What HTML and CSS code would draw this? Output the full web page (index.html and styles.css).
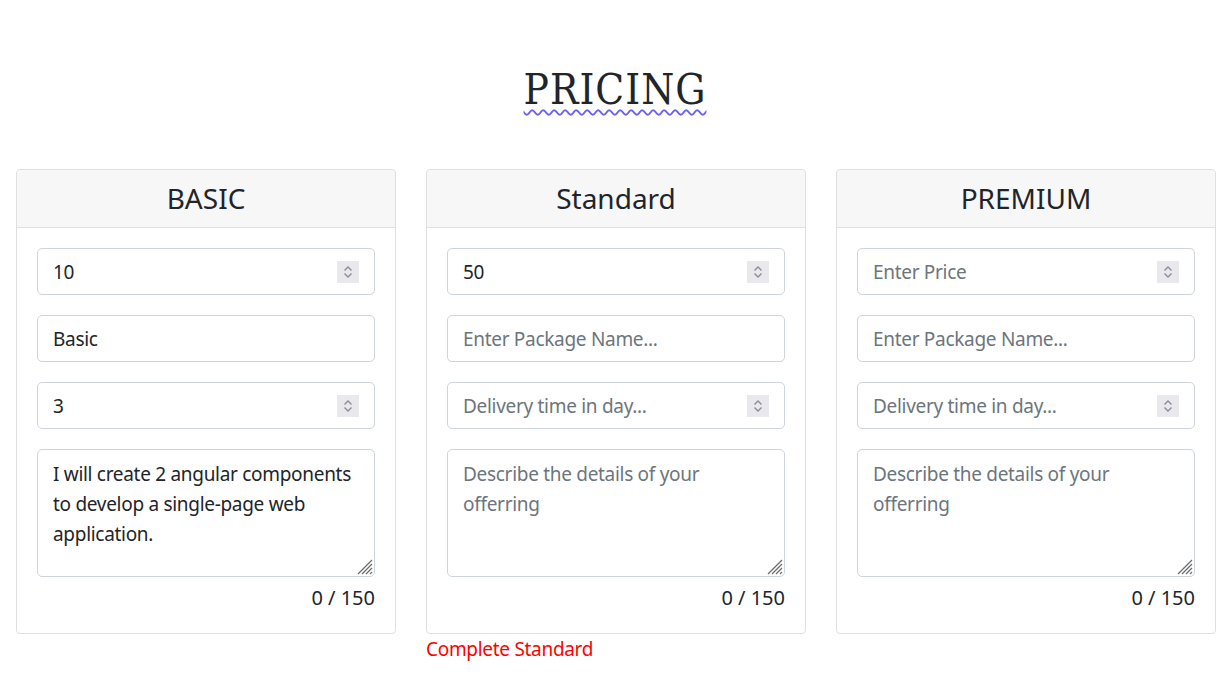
FILE: index.html
```html
<!DOCTYPE html>
<html>
<head>
<meta charset="utf-8">
<link rel="stylesheet" href="styles.css">
</head>
<body>
<h1 class="title"><span class="title-text">PRICING</span></h1>
<div class="cards">
  <div class="col">
    <div class="card">
      <div class="card-header"><h3 class="card-title">BASIC</h3></div>
      <div class="card-body">
        <div class="field"><input class="control" type="text" value="10" placeholder="Enter Price"><span class="spin"><svg width="10" height="16" viewBox="0 0 10 16"><path d="M1.5 6.5 L5 3 L8.5 6.5 M1.5 9.5 L5 13 L8.5 9.5" fill="none" stroke="#8d8b96" stroke-width="1.4"/></svg></span></div>
        <div class="field"><input class="control" type="text" value="Basic" placeholder="Enter Package Name..."></div>
        <div class="field"><input class="control" type="text" value="3" placeholder="Delivery time in day..."><span class="spin"><svg width="10" height="16" viewBox="0 0 10 16"><path d="M1.5 6.5 L5 3 L8.5 6.5 M1.5 9.5 L5 13 L8.5 9.5" fill="none" stroke="#8d8b96" stroke-width="1.4"/></svg></span></div>
        <div class="area-wrap"><textarea class="control area" placeholder="Describe the details of your offerring">I will create 2 angular components to develop a single-page web application.</textarea><svg class="grip" width="16" height="16" viewBox="0 0 16 16"><path d="M1 15 L15 1 M5 15 L15 5 M9 15 L15 9 M13 15 L15 13" stroke="#6b6b6b" stroke-width="1.2"/></svg></div>
        <div class="count">0 / 150</div>
      </div>
    </div>
  </div>
  <div class="col">
    <div class="card">
      <div class="card-header"><h3 class="card-title">Standard</h3></div>
      <div class="card-body">
        <div class="field"><input class="control" type="text" value="50" placeholder="Enter Price"><span class="spin"><svg width="10" height="16" viewBox="0 0 10 16"><path d="M1.5 6.5 L5 3 L8.5 6.5 M1.5 9.5 L5 13 L8.5 9.5" fill="none" stroke="#8d8b96" stroke-width="1.4"/></svg></span></div>
        <div class="field"><input class="control" type="text" placeholder="Enter Package Name..."></div>
        <div class="field"><input class="control" type="text" placeholder="Delivery time in day..."><span class="spin"><svg width="10" height="16" viewBox="0 0 10 16"><path d="M1.5 6.5 L5 3 L8.5 6.5 M1.5 9.5 L5 13 L8.5 9.5" fill="none" stroke="#8d8b96" stroke-width="1.4"/></svg></span></div>
        <div class="area-wrap"><textarea class="control area" placeholder="Describe the details of your offerring"></textarea><svg class="grip" width="16" height="16" viewBox="0 0 16 16"><path d="M1 15 L15 1 M5 15 L15 5 M9 15 L15 9 M13 15 L15 13" stroke="#6b6b6b" stroke-width="1.2"/></svg></div>
        <div class="count">0 / 150</div>
      </div>
    </div>
    <div class="error">Complete Standard</div>
  </div>
  <div class="col">
    <div class="card">
      <div class="card-header"><h3 class="card-title">PREMIUM</h3></div>
      <div class="card-body">
        <div class="field"><input class="control" type="text" placeholder="Enter Price"><span class="spin"><svg width="10" height="16" viewBox="0 0 10 16"><path d="M1.5 6.5 L5 3 L8.5 6.5 M1.5 9.5 L5 13 L8.5 9.5" fill="none" stroke="#8d8b96" stroke-width="1.4"/></svg></span></div>
        <div class="field"><input class="control" type="text" placeholder="Enter Package Name..."></div>
        <div class="field"><input class="control" type="text" placeholder="Delivery time in day..."><span class="spin"><svg width="10" height="16" viewBox="0 0 10 16"><path d="M1.5 6.5 L5 3 L8.5 6.5 M1.5 9.5 L5 13 L8.5 9.5" fill="none" stroke="#8d8b96" stroke-width="1.4"/></svg></span></div>
        <div class="area-wrap"><textarea class="control area" placeholder="Describe the details of your offerring"></textarea><svg class="grip" width="16" height="16" viewBox="0 0 16 16"><path d="M1 15 L15 1 M5 15 L15 5 M9 15 L15 9 M13 15 L15 13" stroke="#6b6b6b" stroke-width="1.2"/></svg></div>
        <div class="count">0 / 150</div>
      </div>
    </div>
  </div>
</div>
</body>
</html>
```
FILE: styles.css
```css
* { box-sizing: border-box; }
body {
  margin: 0;
  background: #fff;
  color: #212529;
  font-family: "Noto Sans", sans-serif;
  font-size: 19px;
  letter-spacing: -0.3px;
}
.title {
  margin: 0;
  padding: 62px 0 51px;
  text-align: center;
  font-family: "DejaVu Serif", serif;
  font-stretch: condensed;
  font-weight: 400;
  font-size: 42px;
  line-height: 56px;
  letter-spacing: 1px;
  color: #212529;
}
.title-text {
  text-decoration: underline wavy #6d63f2;
  text-decoration-thickness: 1.5px;
  text-underline-offset: 5px;
}
.cards {
  display: flex;
  gap: 30px;
  padding: 0 14px 0 16px;
}
.col { width: 380px; flex: none; }
.card {
  border: 1px solid #dfdfdf;
  border-radius: 4px;
  background: #fff;
}
.card-header {
  background: #f7f7f7;
  border-bottom: 1px solid #dfdfdf;
  border-radius: 4px 4px 0 0;
  padding: 12px 20px;
  text-align: center;
}
.card-title {
  margin: 0;
  font-size: 28px;
  font-weight: 400;
  line-height: 33px;
  letter-spacing: 0;
}
.card-body { padding: 20px; }
.field {
  position: relative;
  margin-bottom: 20px;
}
.control {
  display: block;
  width: 100%;
  height: 47px;
  padding: 8px 15px;
  border: 1px solid #ced4da;
  border-radius: 5px;
  font-family: "Noto Sans", sans-serif;
  font-size: 19px;
  letter-spacing: -0.3px;
  line-height: 30px;
  color: #212529;
  background: #fff;
  outline: none;
}
.control::placeholder { color: #6c757d; opacity: 1; }
.spin {
  position: absolute;
  right: 16px;
  top: 13px;
  width: 22px;
  height: 22px;
  background: #e9e9ed;
  display: flex;
  align-items: center;
  justify-content: center;
}
.area-wrap { position: relative; }
.area {
  height: 128px;
  padding-top: 9px;
  resize: none;
}
.grip {
  position: absolute;
  right: 2px;
  bottom: 2px;
}
.count {
  margin-top: 6px;
  text-align: right;
  font-size: 20px;
  letter-spacing: 0;
  line-height: 30px;
}
.error {
  margin-top: 1px;
  color: #ff0000;
  font-size: 19px;
  line-height: 28px;
}
```
